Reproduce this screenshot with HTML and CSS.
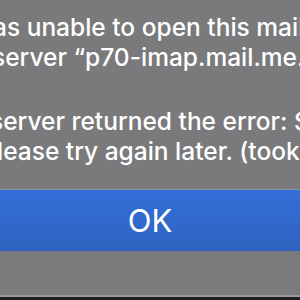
FILE: index.html
```html
<!DOCTYPE html>
<html>
<head>
<meta charset="utf-8">
<link rel="stylesheet" href="styles.css">
</head>
<body>
<div class="dialog">
  <div class="message">
    <p class="line l1">as unable to open this mailbox</p>
    <p class="line l2">server “p70-imap.mail.me.com”</p>
    <p class="line l3 gap">server returned the error: Server</p>
    <p class="line l4">lease try again later. (took</p>
  </div>
  <div class="button">OK</div>
  <div class="footer"></div>
  <div class="below"></div>
</div>
</body>
</html>
```
FILE: styles.css
```css
html, body {
  margin: 0;
  padding: 0;
  width: 300px;
  height: 300px;
  overflow: hidden;
  background: #7a7a7c;
}
.dialog {
  width: 300px;
  height: 300px;
  overflow: hidden;
  display: flex;
  flex-direction: column;
  background: #7a7a7c;
  font-family: Inter, "Noto Sans", sans-serif;
  color: #ffffff;
}
.message {
  padding-top: 12px;
  height: 189px;
  box-sizing: border-box;
}
.line {
  margin: 0;
  white-space: nowrap;
  font-size: 24.5px;
  font-weight: 500;
  line-height: 30px;
  height: 30px;
}
.l1 { margin-left: -7px; }
.l2 { margin-left: -8px; }
.l3 { margin-left: -10px; }
.l4 { margin-left: -3px; }
.gap { margin-top: 34px; }
.button {
  flex: none;
  height: 61px;
  border-top: 1px solid #8f97a6;
  background: linear-gradient(#336fd8, #2f63c0);
  display: flex;
  align-items: center;
  justify-content: center;
  font-size: 31px;
  font-weight: 400;
  color: #ffffff;
}
.footer {
  flex: 1;
  background: #7b7b7d;
  border-bottom: 2px solid #9a9a9c;
}
.below {
  flex: none;
  height: 3px;
  background: #1e1e1e;
}
```
